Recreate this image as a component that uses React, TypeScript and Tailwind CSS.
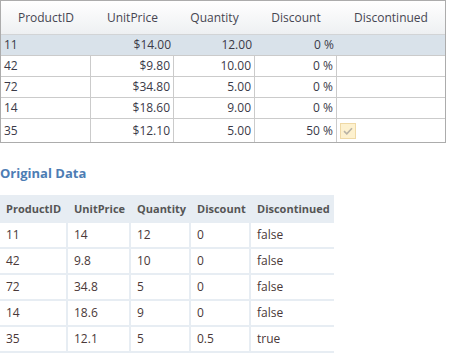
import React from 'react';

const rows = [
  { id: '11', price: '$14.00', qty: '12.00', disc: '0 %', off: false },
  { id: '42', price: '$9.80', qty: '10.00', disc: '0 %', off: false },
  { id: '72', price: '$34.80', qty: '5.00', disc: '0 %', off: false },
  { id: '14', price: '$18.60', qty: '9.00', disc: '0 %', off: false },
  { id: '35', price: '$12.10', qty: '5.00', disc: '50 %', off: true },
];

const original = [
  ['11', '14', '12', '0', 'false'],
  ['42', '9.8', '10', '0', 'false'],
  ['72', '34.8', '5', '0', 'false'],
  ['14', '18.6', '9', '0', 'false'],
  ['35', '12.1', '5', '0.5', 'true'],
];

const cols = 'grid grid-cols-[90px_83px_81px_82px_108px]';

function CheckBox() {
  return (
    <div className="ml-[3px] flex h-4 w-4 items-center justify-center border border-[#efd9a6] bg-[#fdf1cf]">
      <svg width="10" height="8" viewBox="0 0 10 8">
        <path d="M1 4.2 L3.8 6.8 L9 1.2" fill="none" stroke="#b9b3a6" strokeWidth="1.6" />
      </svg>
    </div>
  );
}

export default function App() {
  return (
    <div className="w-[449px] h-[355px] bg-white" style={{ fontFamily: '"Open Sans", "Noto Sans", sans-serif' }}>
      {/* Editable grid */}
      <div className="w-[446px] border border-[#acacac] text-[12px] text-[#3a3a48]">
        <div className={`${cols} h-[34px] items-center border-b border-[#d2d4d6] bg-gradient-to-b from-white to-[#eef0f2] text-[#464652]`}>
          <div className="text-center">ProductID</div>
          <div className="text-center">UnitPrice</div>
          <div className="text-center">Quantity</div>
          <div className="text-center">Discount</div>
          <div className="text-center">Discontinued</div>
        </div>
        {rows.map((r, i) => {
          const selected = i === 0;
          const last = i === rows.length - 1;
          const cell = selected ? '' : 'border-r border-[#cbcbcb]';
          return (
            <div
              key={r.id}
              className={`${cols} ${last ? 'h-[23px]' : 'h-[21px] border-b border-[#cbcbcb]'} ${selected ? 'bg-[#d9e2ea]' : 'bg-white'}`}
            >
              <div className={`${cell} flex items-center pl-[3px]`}>{r.id}</div>
              <div className={`${cell} flex items-center justify-end pr-[3px]`}>{r.price}</div>
              <div className={`${cell} flex items-center justify-end pr-[3px]`}>{r.qty}</div>
              <div className={`${cell} flex items-center justify-end pr-[3px]`}>{r.disc}</div>
              <div className="flex items-center">{r.off && <CheckBox />}</div>
            </div>
          );
        })}
      </div>

      <div className="mt-[20px] h-[21px] text-[13px] font-bold leading-[21px] text-[#4d7db4]">Original Data</div>

      {/* Original data table */}
      <div className="mt-[11px] w-[334px] text-[12px]">
        <div className="grid h-[28px] grid-cols-[68px_63px_60px_60px_83px] items-center bg-[#e7edf3] text-[11px] font-bold text-[#555]">
          <div className="pl-[6px]">ProductID</div>
          <div className="pl-[6px]">UnitPrice</div>
          <div className="pl-[6px]">Quantity</div>
          <div className="pl-[6px]">Discount</div>
          <div className="pl-[6px]">Discontinued</div>
        </div>
        {original.map((r) => (
          <div key={r[0]} className="grid h-[26px] grid-cols-[68px_63px_60px_60px_83px] border-b-2 border-[#e7edf3] text-[#4a3838]">
            {r.map((v, j) => (
              <div key={j} className={`flex items-center pl-[6px] ${j < 4 ? 'border-r-2 border-[#e7edf3]' : ''}`}>
                {v}
              </div>
            ))}
          </div>
        ))}
      </div>
    </div>
  );
}
